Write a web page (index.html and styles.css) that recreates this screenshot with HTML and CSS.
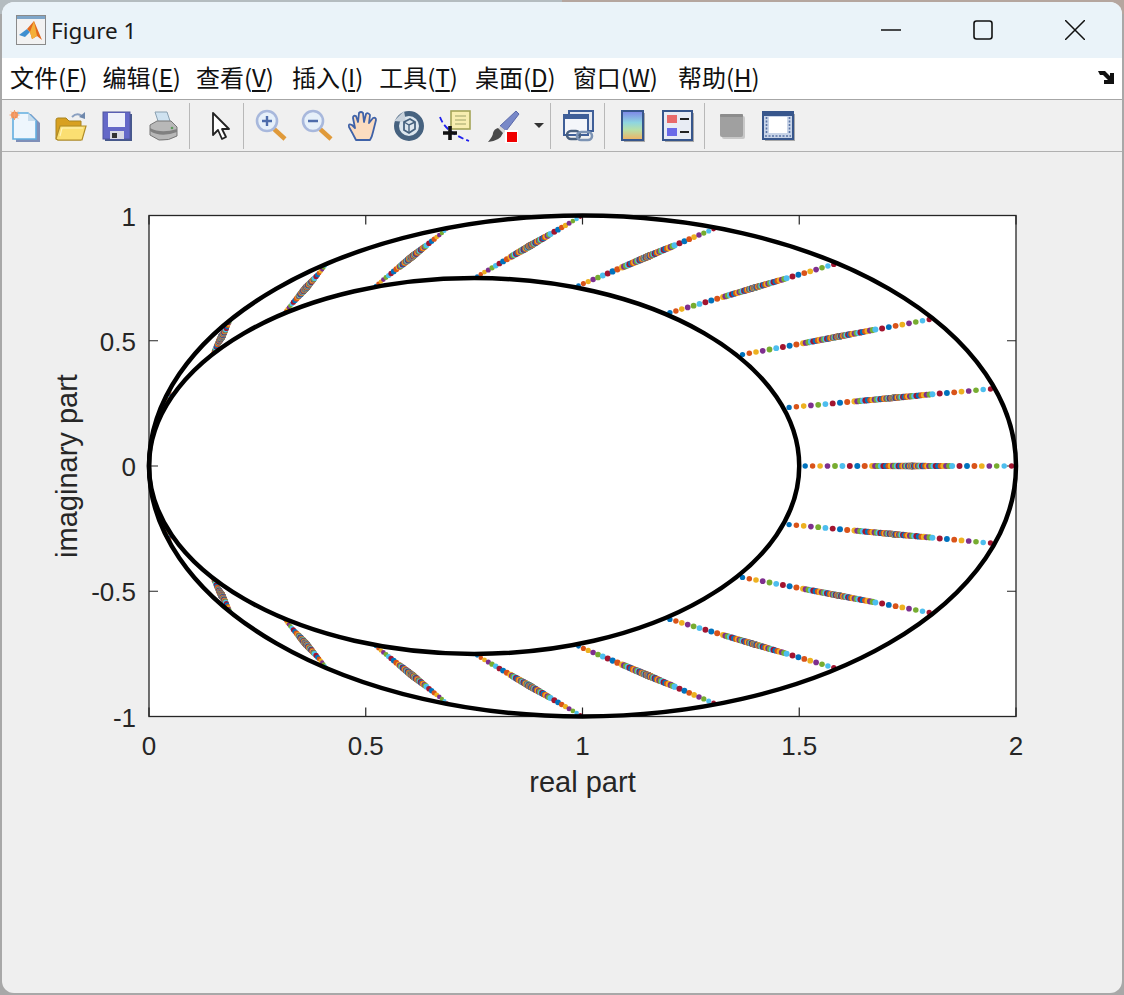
FILE: index.html
```html
<!DOCTYPE html>
<html lang="en">
    <head>
        <meta charset="utf-8">
        <title>Figure 1</title>
        <link rel="stylesheet" href="styles.css">
    </head>
    <body>
        <div class="window">
            <div class="titlebar">
                <svg class="appicon" viewBox="0 0 30 30">
                    <rect x="0.5" y="0.5" width="29" height="29" fill="#f2f2f2" stroke="#8a8a8a"/>
                    <rect x="1" y="1" width="28" height="3" fill="#7fa6c9"/>
                    <path d="M3 20 L11 14 L14 17 L9 22 Z" fill="#3f8fd0"/>
                    <path d="M11 14 L18 6 L26 25 L21 21 L16 24 L14 17 Z" fill="#e2681e"/>
                    <path d="M18 6 L21 21 L16 24 L14 17 Z" fill="#f4b03a"/>
                </svg>
                <span class="title">Figure 1</span>
                <div class="winbtns">
                    <svg class="winbtn" viewBox="0 0 20 20"><path d="M0 10 H20" stroke="#111" stroke-width="1.6"/></svg>
                    <svg class="winbtn" viewBox="0 0 20 20"><rect x="1" y="1" width="18" height="18" rx="2.5" fill="none" stroke="#111" stroke-width="1.6"/></svg>
                    <svg class="winbtn" viewBox="0 0 20 20"><path d="M0 0 L20 20 M20 0 L0 20" stroke="#111" stroke-width="1.5"/></svg>
                </div>
            </div>

            <div class="menubar">
                <span class="menuitem">文件(<u>F</u>)</span>
                <span class="menuitem m2">编辑(<u>E</u>)</span>
                <span class="menuitem m3">查看(<u>V</u>)</span>
                <span class="menuitem m4">插入(<u>I</u>)</span>
                <span class="menuitem m5">工具(<u>T</u>)</span>
                <span class="menuitem m6">桌面(<u>D</u>)</span>
                <span class="menuitem m7">窗口(<u>W</u>)</span>
                <span class="menuitem m8">帮助(<u>H</u>)</span>
                <svg class="dock" viewBox="0 0 16 14"><path d="M0 1 H7 L12 6 V3 H16 V14 H6 V10 H10 L5 5 H2 Z" fill="#111"/></svg>
            </div>

            <div class="toolbar">
                <!-- new -->
                <div class="tool"><svg viewBox="0 0 32 32">
                    <path d="M7 4 H22 L31 13 V32 H7 Z" fill="#7f8fb8"/>
                    <path d="M4 3 H19 L27 11 V29 H4 Z" fill="#eef6fd" stroke="#62aee0" stroke-width="1.6"/>
                    <path d="M19 3 V11 H27 Z" fill="#c8dcec"/>
                    <circle cx="5.5" cy="5" r="3.5" fill="#f08a4a"/>
                    <path d="M5.5 0 V10 M0.5 5 H10.5 M2 1.5 L9 8.5 M9 1.5 L2 8.5" stroke="#f4a070" stroke-width="1"/>
                </svg></div>
                <!-- open -->
                <div class="tool"><svg viewBox="0 0 32 32">
                    <path d="M17 7 Q22 2 27 6" fill="none" stroke="#8ba0c0" stroke-width="2"/>
                    <path d="M24 7 L30 9 L30 2 Z" fill="#6f88ac"/>
                    <path d="M1 10 Q1 8 3 8 H11 L14 11 H26 V30 H3 Q1 30 1 28 Z" fill="#d8a020" stroke="#a88420" stroke-width="1"/>
                    <path d="M1 29 L5 16 H31 L27 30 H3 Z" fill="#fbdf72" stroke="#b08c28" stroke-width="1.2"/>
                    <path d="M5 26 L7 18 H28" fill="none" stroke="#fff3b8" stroke-width="1.2"/>
                </svg></div>
                <!-- save -->
                <div class="tool"><svg viewBox="0 0 32 32">
                    <rect x="4" y="4" width="27" height="27" fill="#46588a"/>
                    <rect x="2" y="2" width="27" height="27" fill="#6468c8" stroke="#4f549e"/>
                    <rect x="7" y="3" width="17" height="14" fill="#eef0fa"/>
                    <rect x="9" y="21" width="14" height="8" fill="#d8d8e4"/>
                    <rect x="11" y="23" width="5" height="5" fill="#333"/>
                </svg></div>
                <!-- print -->
                <div class="tool"><svg viewBox="0 0 32 32">
                    <path d="M8 2 H20 L24 14 H12 Z" fill="#cfe2f0" stroke="#8aa0b0"/>
                    <path d="M3 15 L10 11 H24 L30 17 V26 Q22 31 12 30 L3 25 Z" fill="#b8b8b8" stroke="#777"/>
                    <path d="M3 18 Q14 24 30 19 V22 Q14 28 3 21 Z" fill="#808080"/>
                    <circle cx="25" cy="18" r="1.3" fill="#5c9a5c"/>
                </svg></div>
                <div class="sep"></div>
                <!-- arrow -->
                <div class="tool"><svg viewBox="0 0 32 32">
                    <path d="M12 3 V25 L17 20 L21 29 L25 27 L21 19 L28 19 Z" fill="#fff" stroke="#222" stroke-width="1.8" stroke-linejoin="round"/>
                </svg></div>
                <div class="sep"></div>
                <!-- zoom in -->
                <div class="tool"><svg viewBox="0 0 32 32">
                    <path d="M19 19 L30 29" stroke="#e09a3a" stroke-width="4.5"/>
                    <circle cx="12" cy="11" r="10" fill="#e6f0fa" stroke="#a8b8dc" stroke-width="2.6"/>
                    <path d="M7 11 H17 M12 6 V16" stroke="#4d6cab" stroke-width="2.4"/>
                </svg></div>
                <!-- zoom out -->
                <div class="tool"><svg viewBox="0 0 32 32">
                    <path d="M19 19 L30 29" stroke="#e09a3a" stroke-width="4.5"/>
                    <circle cx="12" cy="11" r="10" fill="#e6f0fa" stroke="#a8b8dc" stroke-width="2.6"/>
                    <path d="M7 11 H17" stroke="#4d6cab" stroke-width="2.4"/>
                </svg></div>
                <!-- hand -->
                <div class="tool"><svg viewBox="0 0 32 32">
                    <path d="M9 30 Q6 24 2 17 Q1 13 5 15 L8 18 L6 8 Q6 5 9 6 L11 12 L12 3 Q14 1 16 3 L17 12 L19 4 Q21 2 23 5 L22 13 L26 8 Q29 7 29 10 L26 22 Q25 27 23 30 Z" fill="#fbdcc0" stroke="#3f62a8" stroke-width="1.8" stroke-linejoin="round"/>
                </svg></div>
                <!-- rotate -->
                <div class="tool"><svg viewBox="0 0 32 32">
                    <circle cx="16" cy="16" r="12.5" fill="#dce6ee" stroke="#46627f" stroke-width="5"/>
                    <path d="M1 11 L11 1 L13 12 Z" fill="#c8d2dc"/>
                    <path d="M11 12 L17 9 L22 12 V19 L16 23 L11 20 Z" fill="none" stroke="#46627f" stroke-width="1.8"/>
                    <path d="M11 12 L16 15 L22 12 M16 15 V23" fill="none" stroke="#46627f" stroke-width="1.4"/>
                </svg></div>
                <!-- data cursor -->
                <div class="tool"><svg viewBox="0 0 32 32">
                    <rect x="12" y="1" width="19" height="18" fill="#f8eeb0" stroke="#a4a458" stroke-width="1.6"/>
                    <path d="M16 6 H27 M16 10 H27 M16 14 H27" stroke="#bcbc80" stroke-width="1.4"/>
                    <path d="M1 7 Q6 22 30 31" fill="none" stroke="#2020ee" stroke-width="1.8" stroke-dasharray="6 3"/>
                    <path d="M11 16 V30 M4 23 H18" stroke="#111" stroke-width="3.6"/>
                </svg></div>
                <!-- brush -->
                <div class="tool brush"><svg viewBox="0 0 32 32">
                    <path d="M13 16 L29 1 L32 4 L19 21 Z" fill="#7888c8" stroke="#5a68a8"/>
                    <path d="M13 16 L19 21 L15 24 L11 19 Z" fill="#d8d8d8"/>
                    <path d="M11 18 L16 23 Q13 31 1 32 Q6 26 6 23 Q7 19 11 18 Z" fill="#4a4a4a"/>
                    <rect x="18" y="20" width="13" height="13" fill="#fff"/>
                    <rect x="20" y="22" width="10" height="10" fill="#f00000"/>
                </svg></div>
                <div class="caret"></div>
                <div class="sep"></div>
                <!-- link -->
                <div class="tool"><svg viewBox="0 0 32 32">
                    <rect x="7" y="1" width="24" height="20" fill="#e4e8f0" stroke="#3f5f98" stroke-width="2"/>
                    <rect x="2" y="5" width="24" height="20" fill="#f4f6fa" stroke="#3f5f98" stroke-width="2"/>
                    <rect x="2" y="5" width="24" height="4" fill="#3f5f98"/>
                    <rect x="5" y="21" width="13" height="8" rx="4" fill="none" stroke="#49607f" stroke-width="2.6"/>
                    <rect x="15" y="22" width="15" height="8" rx="4" fill="none" stroke="#7d94b4" stroke-width="2.6"/>
                </svg></div>
                <div class="sep"></div>
                <!-- colorbar -->
                <div class="tool"><svg viewBox="0 0 32 32">
                    <defs>
                        <linearGradient id="cbar" x1="0" y1="0" x2="0" y2="1">
                            <stop offset="0" stop-color="#7d84e8"/>
                            <stop offset="0.4" stop-color="#8fd6e0"/>
                            <stop offset="0.65" stop-color="#b8e0a8"/>
                            <stop offset="1" stop-color="#f2b060"/>
                        </linearGradient>
                    </defs>
                    <rect x="8" y="3" width="21" height="29" fill="#a8a8a8"/>
                    <rect x="6" y="1" width="21" height="29" fill="url(#cbar)" stroke="#37568c" stroke-width="2"/>
                </svg></div>
                <!-- legend -->
                <div class="tool"><svg viewBox="0 0 32 32">
                    <rect x="3" y="3" width="29" height="29" fill="#a8a8a8"/>
                    <rect x="1" y="1" width="29" height="29" fill="#e8ecf4" stroke="#37568c" stroke-width="2"/>
                    <rect x="5" y="5" width="10" height="8" fill="#e86a6a"/>
                    <rect x="5" y="18" width="10" height="8" fill="#6a6ae8"/>
                    <path d="M18 9 H27 M18 22 H27" stroke="#222" stroke-width="2.2"/>
                </svg></div>
                <div class="sep"></div>
                <!-- grey box -->
                <div class="tool"><svg viewBox="0 0 32 32">
                    <rect x="6" y="6" width="23" height="23" rx="2" fill="#c8c8c8"/>
                    <rect x="4" y="4" width="23" height="23" rx="2" fill="#a0a0a0"/>
                    <rect x="4" y="4" width="23" height="3" rx="1" fill="#8c8c8c"/>
                </svg></div>
                <!-- frame -->
                <div class="tool"><svg viewBox="0 0 32 32">
                    <rect x="3" y="4" width="30" height="27" fill="#a8a8a8"/>
                    <rect x="1" y="2" width="30" height="27" fill="#c8d4e8" stroke="#37568c" stroke-width="2"/>
                    <rect x="1" y="2" width="30" height="4" fill="#37568c"/>
                    <rect x="7" y="7" width="18" height="16" fill="#fff"/>
                    <path d="M4.5 7 V23 M27.5 7 V23 M3 26 H29" stroke="#5a74a4" stroke-width="1.6" stroke-dasharray="2 1.5"/>
                </svg></div>
            </div>

            <div class="figure">
                <svg id="plot" class="plot" viewBox="0 152 1120 839"></svg>
            </div>
        </div>
        <script src="plot.js"></script>
    </body>
</html>
```

FILE: styles.css
```css
html, body{
    margin: 0;
    height: 100%;
    overflow: hidden;
}

body{
    background:
        linear-gradient(to right, #b4bcc0 0%, #b4bcc0 50%, #b5a69f 50%, #b5a69f 100%) top / 100% 14px no-repeat,
        #a8a8a8;
    font-family: "Noto Sans", "Noto Sans CJK SC", sans-serif;
}

.window{
    box-sizing: border-box;
    height: 991px;
    margin: 2px 2px 0;
    display: flex;
    flex-direction: column;
    border-radius: 12px;
    overflow: hidden;
    background-color: #efefef;
}

.titlebar{
    flex: 0 0 56px;
    display: flex;
    align-items: center;
    padding-left: 14px;
    background-color: #eaf3f9;
}
.appicon{
    width: 30px;
    height: 30px;
}
.title{
    margin-left: 5px;
    margin-top: 1px;
    font-size: 22.5px;
    color: #1a1a1a;
}
.winbtns{
    margin-left: auto;
    display: flex;
    gap: 72px;
    padding-right: 37px;
}
.winbtn{
    width: 20px;
    height: 20px;
}

.menubar{
    box-sizing: border-box;
    flex: 0 0 42px;
    display: flex;
    align-items: center;
    background-color: #fff;
    border-bottom: 1px solid #a6a6a6;
    padding: 0 0 4px 8px;
    font-family: "Noto Sans CJK SC", "Noto Sans", sans-serif;
    font-size: 24px;
    color: #111;
}
.menuitem{
    white-space: nowrap;
}
.menuitem u{
    text-underline-offset: 3px;
}
.m2, .m3{ margin-left: 15px; }
.m4{ margin-left: 18px; }
.m5{ margin-left: 16px; }
.m6{ margin-left: 17px; }
.m7{ margin-left: 17px; }
.m8{ margin-left: 20px; }
.dock{
    margin-left: auto;
    margin-right: 8px;
    width: 16px;
    height: 14px;
}

.toolbar{
    flex: 0 0 51px;
    display: flex;
    align-items: center;
    border-bottom: 1px solid #b0b0b0;
    background-color: #f0f0f0;
}
.tool{
    width: 46px;
    display: flex;
    justify-content: center;
}
.tool svg{
    width: 32px;
    height: 32px;
    overflow: visible;
}
.sep{
    width: 1px;
    height: 46px;
    margin: 0 4px 0 3px;
    background-color: #b8b8b8;
}
.brush{
    margin-left: 2px;
    margin-right: -4px;
}
.caret{
    width: 0;
    height: 0;
    margin: 0 3px 0 12px;
    border-left: 5px solid transparent;
    border-right: 5px solid transparent;
    border-top: 5px solid #333;
}

.figure{
    flex: 1;
    min-height: 0;
}
.plot{
    display: block;
    width: 1120px;
    height: 839px;
    overflow: visible;
}
.plot text{
    font-family: "Liberation Sans", Arial, sans-serif;
    fill: #262626;
}
.tick{
    font-size: 26px;
}
.axislabel{
    font-size: 29px;
}
.axes{
    fill: #fff;
    stroke: #262626;
    stroke-width: 1.3;
}
.tickmark{
    stroke: #262626;
    stroke-width: 1.2;
}
.ring{
    fill: none;
    stroke: #000;
    stroke-width: 4.5;
}
```

FILE: plot.js
```js
// draws the axes, the rays of dots and the two circles
const NS = 'http://www.w3.org/2000/svg';
const plot = document.getElementById('plot');
// the svg starts 2px right of the page edge, data coords below are page pixels
const OFFX = -2;
const colors = ['#0072BD', '#D95319', '#EDB120', '#7E2F8E', '#77AC30', '#4DBEEE', '#A2142F'];

const sx = v => 149 + v * 433.5 + OFFX;
const sy = v => 466 - v * 250.5;

function add(tag, attrs, text) {
    const el = document.createElementNS(NS, tag);
    for (const k in attrs) el.setAttribute(k, attrs[k]);
    if (text) el.textContent = text;
    plot.appendChild(el);
    return el;
}

add('rect', { class: 'axes', x: sx(0), y: sy(1), width: 867, height: 501 });

// ticks
[0, 0.5, 1, 1.5, 2].forEach(v => {
    add('path', { class: 'tickmark', d: `M${sx(v)} ${sy(1)} v9 M${sx(v)} ${sy(-1)} v-9` });
    add('text', { class: 'tick', x: sx(v), y: 755, 'text-anchor': 'middle' }, String(v));
});
[-1, -0.5, 0, 0.5, 1].forEach(v => {
    add('path', { class: 'tickmark', d: `M${sx(0)} ${sy(v)} h9 M${sx(2)} ${sy(v)} h-9` });
    add('text', { class: 'tick', x: sx(0) - 13, y: sy(v) + 10, 'text-anchor': 'end' }, String(v));
});

add('text', { class: 'axislabel', x: sx(1), y: 792, 'text-anchor': 'middle' }, 'real part');
add('text', { class: 'axislabel', x: 0, y: 0, 'text-anchor': 'middle',
    transform: `translate(${77 + OFFX} 466) rotate(-90)` }, 'imaginary part');

// dot position along a ray, tight in the middle and evenly spaced at the ends
function dotFractions() {
    const out = [];
    const M = 26;
    for (let j = -(M + 9); j <= M + 8; j++) {
        const a = Math.abs(j);
        const d = a <= M ? 40 * Math.pow(a / M, 2) : 40 + 7.45 * (a - M);
        const pos = 912 + Math.sign(j) * d;
        out.push({ s: (pos - 799) / 217 });
    }
    return out;
}

const fractions = dotFractions();
for (let deg = -162; deg <= 162; deg += 18) {
    const t = deg * Math.PI / 180;
    const inner = [0.75 + 0.75 * Math.cos(t), 0.75 * Math.sin(t)];
    const outer = [1 + Math.cos(t), Math.sin(t)];
    const a = Math.abs(deg);
    const rEnd = a <= 54 ? 2.6 : 2.6 - (a - 54) * 0.018;
    const rMid = a <= 54 ? 3.2 : 3.5;
    fractions.forEach((f, i) => {
        const w = Math.pow(Math.max(0, 1 - Math.abs(f.s - 0.5) * 2), 0.7);
        const r = rEnd + (rMid - rEnd) * w;
        add('circle', {
            cx: sx(inner[0] + (outer[0] - inner[0]) * f.s).toFixed(1),
            cy: sy(inner[1] + (outer[1] - inner[1]) * f.s).toFixed(1),
            r: r.toFixed(2),
            fill: colors[i % 7]
        });
    });
}

add('ellipse', { class: 'ring', cx: sx(1), cy: sy(0), rx: 433.5, ry: 250.5 });
add('ellipse', { class: 'ring', cx: sx(0.75), cy: sy(0), rx: 325.1, ry: 187.9 });
```
